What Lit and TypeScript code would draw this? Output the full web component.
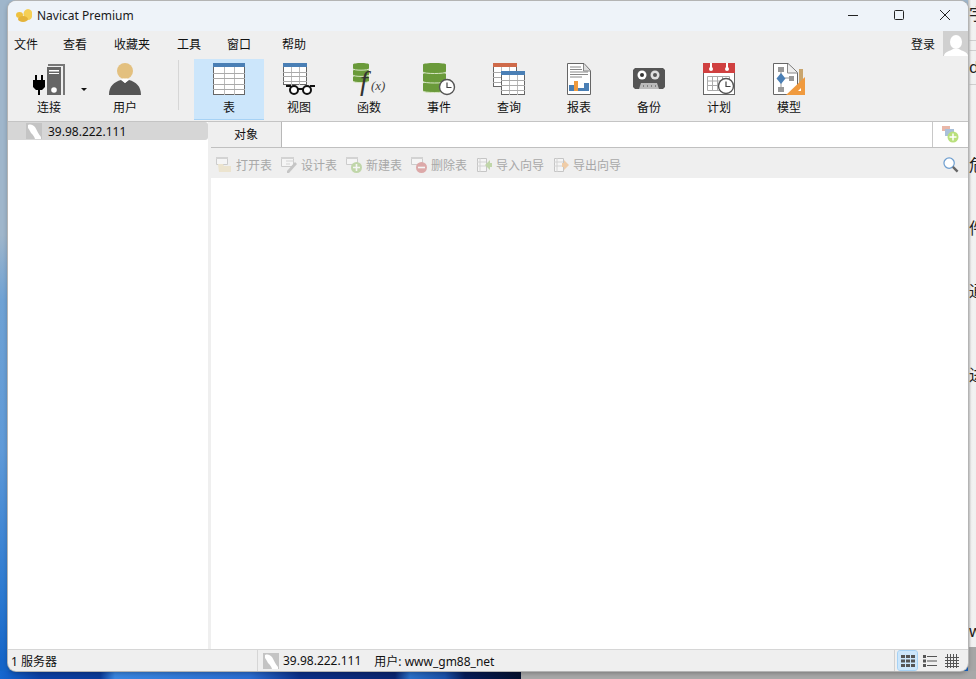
import { LitElement, html, css, svg } from 'lit';
import { customElement } from 'lit/decorators.js';

// draws a small table, x/y/w/h in icon coords
const grid = (x: number, y: number, w: number, h: number, head: string, cols: number, rows: number) => {
  const lines = [];
  const top = y + 4;
  for (let i = 1; i < cols; i++) {
    const lx = Math.round(x + (w * i) / cols) + 0.5;
    lines.push(svg`<path d="M${lx} ${top}V${y + h}" stroke="#bbb" stroke-width="1"/>`);
  }
  for (let i = 1; i < rows; i++) {
    const ly = Math.round(top + ((y + h - top) * i) / rows) + 0.5;
    lines.push(svg`<path d="M${x} ${ly}H${x + w}" stroke="#aaa" stroke-width="1"/>`);
  }
  return svg`<rect x="${x + 0.5}" y="${y + 0.5}" width="${w - 1}" height="${h - 1}" fill="#fff" stroke="#666"/>
    ${lines}<rect x="${x}" y="${y}" width="${w}" height="4" fill="${head}"/>`;
};

const db = (x: number, y: number, w: number, disc: number, n: number) => {
  const out = [];
  for (let i = n - 1; i >= 0; i--) {
    const cy = y + i * disc;
    out.push(svg`<path d="M${x} ${cy + 1.5} c0 -2 ${w} -2 ${w} 0 v${disc - 2} c0 2 -${w} 2 -${w} 0 z" fill="#6a9a3a"/>
      <path d="M${x} ${cy + disc - 0.5} c0 2 ${w} 2 ${w} 0" fill="none" stroke="#d7e6c4" stroke-width="1"/>`);
  }
  return out;
};

const clock = (cx: number, cy: number, r: number) => svg`
  <circle cx="${cx}" cy="${cy}" r="${r}" fill="#fff" stroke="#555" stroke-width="1.4"/>
  <path d="M${cx} ${cy - r + 3}V${cy + 0.5}H${cx + r - 3}" fill="none" stroke="#444" stroke-width="1.2"/>`;

const ICONS: Record<string, unknown> = {
  plug: svg`<path d="M15 1h17v31h-2V3H15z" fill="#777"/>
    <rect x="14" y="4" width="14" height="28" fill="#666"/>
    <path d="M16 7h10v1.5H16zM16 10h10v1H16z" fill="#fff"/>
    <circle cx="21" cy="27" r="2.8" fill="#fff"/>
    <path d="M2 12h2v5h4v-5h2v5h2v7l-3 3H7v5H5v-5H3l-3-3v-7h2z" fill="#000"/>`,
  user: svg`<circle cx="16" cy="8" r="8" fill="#e3c07f"/>
    <path d="M0 32c0-9 5-13 12-15l4 3 4-3c7 2 12 6 12 15z" fill="#555"/>
    <path d="M12 16.500l4 3.500 4-3.500-2-1h-4z" fill="#fff"/>`,
  table: grid(0, 0, 32, 32, '#4a7fb5', 3, 5),
  view: svg`${grid(0, 0, 24, 22, '#4a7fb5', 3, 4)}
    <circle cx="11" cy="27" r="4" fill="#fff" stroke="#111" stroke-width="2"/>
    <circle cx="24" cy="27" r="4" fill="#fff" stroke="#111" stroke-width="2"/>
    <path d="M15 26h5" stroke="#111" stroke-width="2"/>
    <path d="M3 23h5M27 23h5" stroke="#111" stroke-width="2"/>`,
  func: svg`${db(0, 0, 16, 6.2, 3)}
    <text x="7" y="27" font-family="Liberation Serif" font-style="italic" font-size="28" fill="#333">f</text>
    <text x="18" y="27" font-family="Liberation Serif" font-style="italic" font-size="13" fill="#444">(x)</text>`,
  event: svg`${db(0, 0, 23, 9.500, 3)}${clock(24, 24, 7.500)}`,
  query: svg`${grid(0, 0, 24, 24, '#cf6a4a', 3, 4)}${grid(8, 8, 24, 24, '#4a7fb5', 3, 4)}`,
  report: svg`<path d="M4.500 .5H21l6.500 7v24h-23z" fill="#fff" stroke="#666"/>
    <path d="M20.500 1v7h7" fill="#ddd" stroke="#888"/>
    <path d="M7 4h11M7 6.500h12M7 9h18M7 11.500h18M7 14h12" stroke="#888"/>
    <path d="M6 22h5v6H6z" fill="#4a7fb5"/><path d="M11 18h4v10h-4z" fill="#f09a3e"/>
    <path d="M15 25h6v3h-6z" fill="#4a7fb5"/><path d="M21 20h5v8h-5z" fill="#4a7fb5"/>`,
  backup: svg`<path d="M2 5h28l2 2v17l-2 2H2l-2-2V7z" fill="#555"/>
    <circle cx="9" cy="12" r="4.500" fill="#fff"/><circle cx="9" cy="12" r="2" fill="#333"/>
    <circle cx="22" cy="12" r="4.500" fill="#ddd"/><circle cx="22" cy="12" r="2" fill="#555"/>
    <path d="M6 26l2-6h16l2 6z" fill="#bbb"/><path d="M10 23h1M14 23h1M18 23h1M22 23h1" stroke="#444"/>`,
  schedule: svg`<rect x=".5" y=".5" width="31" height="31" fill="#fff" stroke="#666"/>
    <rect width="32" height="10" fill="#d04040"/>
    <path d="M8 0v5M24 0v5" stroke="#fff" stroke-width="2"/>
    <circle cx="8" cy="6" r="2" fill="#fff"/><circle cx="24" cy="6" r="2" fill="#fff"/>
    <path d="M4.500 13.500h22v14h-22zM4.500 18h22M4.500 22.500h22M9.500 13.500v14M14.500 13.500v14M19.500 13.500v14" fill="none" stroke="#aaa"/>
    ${clock(23, 23, 7.500)}`,
  model: svg`<path d="M.5 .5H15l9.500 9v22H.5z" fill="#fff" stroke="#666"/>
    <path d="M14.500 1v9h10" fill="#eee" stroke="#888"/>
    <path d="M8 6v20M12 15h8" stroke="#999"/>
    <rect x="5" y="4" width="6" height="5" fill="#999"/>
    <rect x="5" y="24" width="6" height="5" fill="#999"/>
    <rect x="16" y="13" width="5" height="5" fill="#999"/>
    <path d="M8 10l4.500 5.500L8 21l-4.500-5.500z" fill="#4a7fb5"/>
    <path d="M26 6h4v16h-4z" fill="#c9a56e"/>
    <path d="M32 14v18H13z" fill="#f09a3e"/><path d="M28 25v3h-3z" fill="#fff"/>`,
};

const MINI: Record<string, unknown> = {
  open: svg`<path d="M.5 .5h11v7H.5z" fill="#fff" stroke="#999"/><path d="M0 0h12v2H0z" fill="#aaa"/>
    <path d="M2 7h5l1 2h7v6H3z" fill="#e8d6a0"/>`,
  design: svg`<path d="M.5 .5h12v9H.5z" fill="#fff" stroke="#999"/><path d="M0 0h13v2H0z" fill="#aaa"/>
    <path d="M5 4h8M5 7h4" stroke="#aaa"/><path d="M6 14l8-9 2 2-8 9H6z" fill="#888"/>`,
  add: svg`<path d="M.5 .5h11v7H.5z" fill="#fff" stroke="#999"/><path d="M0 0h12v2H0z" fill="#aaa"/>
    <circle cx="10.500" cy="10.500" r="5.500" fill="#7cb342"/><path d="M7 10.500h7M10.500 7v7" stroke="#fff" stroke-width="1.600"/>`,
  del: svg`<path d="M.5 .5h11v7H.5z" fill="#fff" stroke="#999"/><path d="M0 0h12v2H0z" fill="#aaa"/>
    <circle cx="10.500" cy="10.500" r="5.500" fill="#c04040"/><path d="M7 10.500h7" stroke="#fff" stroke-width="1.600"/>`,
  imp: svg`<path d="M1.500 1.500h9v13h-9z" fill="#fff" stroke="#888"/><path d="M4 1v14M1 5h9M1 9h9" stroke="#aaa"/>
    <path d="M9 8l5-5v3h2v4h-2v3z" fill="#7cb342"/>`,
  exp: svg`<path d="M1.500 1.500h9v13h-9z" fill="#fff" stroke="#888"/><path d="M4 1v14M1 5h9M1 9h9" stroke="#aaa"/>
    <path d="M16 8l-5-5v3H9v4h2v3z" fill="#f09a3e"/>`,
};

const LEFT_TOOLS = [
  { icon: 'plug', label: '连接', cls: 'connect' },
  { icon: 'user', label: '用户', cls: 'account' },
];
const MAIN_TOOLS = [
  { icon: 'table', label: '表', cls: 'on' },
  { icon: 'view', label: '视图', cls: '' },
  { icon: 'func', label: '函数', cls: '' },
  { icon: 'event', label: '事件', cls: '' },
  { icon: 'query', label: '查询', cls: '' },
  { icon: 'report', label: '报表', cls: '' },
  { icon: 'backup', label: '备份', cls: '' },
  { icon: 'schedule', label: '计划', cls: '' },
  { icon: 'model', label: '模型', cls: '' },
];
const ACTIONS = [
  { icon: 'open', label: '打开表' },
  { icon: 'design', label: '设计表' },
  { icon: 'add', label: '新建表' },
  { icon: 'del', label: '删除表' },
  { icon: 'imp', label: '导入向导' },
  { icon: 'exp', label: '导出向导' },
];
const MENUS = ['文件', '查看', '收藏夹', '工具', '窗口', '帮助'];
// bits of other windows that stick out behind this one
const BEHIND = [
  { t: '字', y: 5 }, { t: 'd', y: 58 }, { t: '危', y: 156 },
  { t: '件', y: 219 }, { t: '通', y: 282 }, { t: '进', y: 366 }, { t: 'w', y: 622 },
];

const seal = (size: number) => html`<svg width=${size} height=${size} viewBox="0 0 16 16">
  <rect width="16" height="16" fill="#c4c4c4"/>
  <path d="M2 2c3-1 5 0 7 2 2 3 3 7 6 10v2H9C8 13 7 12 5 10 4 8 3 6 2 5z" fill="#fff"/>
</svg>`;

@customElement('app-root')
export class AppRoot extends LitElement {
  static styles = css`
    :host {
      display: block;
      width: 976px;
      height: 679px;
      position: relative;
      overflow: hidden;
      font-family: "Noto Sans", "Noto Sans CJK SC", sans-serif;
    }
    .desktop {
      position: absolute;
      inset: 0;
      background: linear-gradient(180deg, #9fb6cb 0, #9fb6cb 235px, #6fa2d4 300px, #5f9ad8 450px, #2a78d0 600px, #1565c8 660px);
    }
    .strip {
      position: absolute;
      left: 968px;
      right: 0;
      top: 0;
      height: 647px;
      background: linear-gradient(90deg, #bdbdbd 0, #f4f4f4 3px, #f0f0f0 100%);
    }
    .strip-low {
      position: absolute;
      left: 968px;
      right: 0;
      top: 647px;
      bottom: 0;
      background: #a6a6a6;
    }
    .wallpaper {
      position: absolute;
      left: 0;
      width: 521px;
      top: 671px;
      bottom: 0;
      background: linear-gradient(90deg, #1668d0 0, #0a3fa4 40px, #0a3a98 100px, #3a86e0 115px, #2a6cd0 250px, #0a2f88 300px, #0a2570 395px, #2a70c8 410px, #1a50a8 445px, #061c58 465px, #04102e 521px);
    }
    .floor {
      position: absolute;
      left: 521px;
      right: 0;
      top: 671px;
      bottom: 0;
      background: #a8a8a8;
    }
    .behind {
      position: absolute;
      left: 969px;
      font-size: 16px;
      line-height: 18px;
      color: #222;
    }
    .rule {
      position: absolute;
      left: 969px;
      right: 0;
      height: 1px;
      background: #cfcfcf;
    }
    .window {
      position: absolute;
      left: 8px;
      top: 1px;
      width: 960px;
      height: 670px;
      display: flex;
      flex-direction: column;
      background: #efefef;
      border-radius: 8px;
      overflow: hidden;
      box-shadow: 0 0 0 1px #b4b4b4, 0 2px 5px rgba(0, 0, 0, 0.3);
      font-size: 12px;
      color: #111;
    }
    .title {
      height: 30px;
      box-sizing: border-box;
      flex: none;
      display: flex;
      align-items: center;
      background: #eef3f9;
      padding: 0 0 2px 8px;
    }
    .title .logo { margin-right: 5px; }
    .title .name { flex: 1; font-size: 12px; color: #1a1a1a; }
    .winbtn {
      width: 46px;
      height: 28px;
      display: flex;
      align-items: center;
      justify-content: center;
    }
    .menubar {
      height: 28px;
      flex: none;
      display: grid;
      grid-template-columns: 49px 51px 63px 50px 55px 1fr auto 8px 25px;
      padding-left: 6px;
      align-items: start;
    }
    .menubar span { line-height: 28px; }
    .avatar { width: 25px; height: 25px; grid-column: 9; }
    .login { grid-column: 7; }
    .toolbar {
      height: 62px;
      flex: none;
      display: flex;
      border-bottom: 1px solid #c4c4c4;
    }
    .tool {
      width: 70px;
      height: 61px;
      box-sizing: border-box;
      display: flex;
      flex-direction: column;
      align-items: center;
      padding-top: 4px;
      position: relative;
    }
    .tool svg { display: block; }
    .tool span { margin-top: 4px; line-height: 17px; }
    .tool.on {
      background: #cce6fb;
      border-bottom: 1px solid #a6d2f5;
    }
    .tool.connect { margin-left: 6px; }
    .tool.account { margin-left: 6px; }
    .caret {
      position: absolute;
      right: -3px;
      top: 29px;
      width: 0;
      height: 0;
      border: 3px solid transparent;
      border-top: 3px solid #111;
    }
    .sep { width: 1px; height: 50px; margin: 1px 15px 0 18px; background: #d6d6d6; }
    .body { flex: 1; display: flex; min-height: 0; }
    .side { width: 200px; flex: none; background: #fff; }
    .conn {
      height: 18px;
      background: #d6d6d6;
      display: flex;
      align-items: center;
      padding-left: 18px;
      gap: 6px;
      border-radius: 0 3px 3px 0;
    }
    .main {
      flex: 1;
      margin-left: 3px;
      display: flex;
      flex-direction: column;
      min-width: 0;
    }
    .tabs { height: 26px; flex: none; display: flex; border-bottom: 1px solid #c0c0c0; box-sizing: border-box; }
    .tab { width: 70px; text-align: center; line-height: 26px; }
    .search {
      flex: 1;
      background: #fff;
      border-left: 1px solid #b8b8b8;
      border-right: 1px solid #c8c8c8;
    }
    .plus { width: 35px; display: flex; align-items: center; justify-content: center; background: #fff; }
    .actions { height: 30px; box-sizing: border-box; flex: none; display: flex; align-items: center; padding: 4px 0 0 5px; }
    .action { display: flex; align-items: center; gap: 4px; margin-right: 9px; color: #a8a8a8; }
    .action svg { opacity: 0.4; }
    .actions .find { margin-left: auto; margin-right: 9px; display: block; }
    .content { flex: 1; background: #fff; }
    .status {
      height: 22px;
      flex: none;
      display: flex;
      align-items: center;
      border-top: 1px solid #d6d6d6;
      box-sizing: border-box;
    }
    .status .count { width: 249px; padding-left: 3px; box-sizing: border-box; }
    .status .info {
      flex: 1;
      height: 100%;
      display: flex;
      align-items: center;
      border-left: 1px solid #d6d6d6;
      padding-left: 5px;
    }
    .status .info .ip { margin: 0 13px 0 4px; }
    .views {
      height: 100%;
      display: flex;
      align-items: center;
      border-left: 1px solid #d0d0d0;
      padding: 0 7px 0 3px;
      gap: 3px;
    }
    .vbtn { width: 19px; height: 19px; display: flex; align-items: center; justify-content: center; }
    .vbtn.on { background: #cce6fb; outline: 1px solid #a6d2f5; border-radius: 2px; }
  `;

  private _tool(t: { icon: string; label: string; cls: string }) {
    return html`<div class="tool ${t.cls}">
      <svg width="32" height="32" viewBox="0 0 32 32" style="overflow:visible">${ICONS[t.icon]}</svg>
      <span>${t.label}</span>
      ${t.cls === 'connect' ? html`<i class="caret"></i>` : ''}
    </div>`;
  }

  render() {
    return html`
      <div class="desktop"></div>
      <div class="strip"></div>
      <div class="strip-low"></div>
      <div class="wallpaper"></div>
      <div class="floor"></div>
      ${BEHIND.map((b) => html`<span class="behind" style="top:${b.y}px">${b.t}</span>`)}
      <div class="rule" style="top:40px"></div>
      <div class="rule" style="top:50px"></div>
      <div class="rule" style="top:84px"></div>
      <div class="window">
        <div class="title">
          <svg class="logo" width="16" height="16" viewBox="0 0 16 16">
            <ellipse cx="12" cy="7.500" rx="4.500" ry="5.500" fill="#f5cf55"/>
            <ellipse cx="3.500" cy="8" rx="3.500" ry="3" fill="#eec13f"/>
            <ellipse cx="7" cy="12" rx="5" ry="3" fill="#e4b33a"/>
          </svg>
          <span class="name">Navicat Premium</span>
          <div class="winbtn">
            <svg width="10" height="10"><path d="M0 5.500h10" stroke="#222"/></svg>
          </div>
          <div class="winbtn">
            <svg width="10" height="10"><rect x=".5" y=".5" width="9" height="9" rx="1" fill="none" stroke="#222"/></svg>
          </div>
          <div class="winbtn">
            <svg width="10" height="10"><path d="M0 0l10 10M10 0L0 10" stroke="#222"/></svg>
          </div>
        </div>
        <div class="menubar">
          ${MENUS.map((m) => html`<span>${m}</span>`)}
          <span class="login">登录</span>
          <svg class="avatar" viewBox="0 0 25 25">
            <rect width="25" height="25" fill="#d0d0d0"/>
            <ellipse cx="13" cy="11" rx="6" ry="7" fill="#fff"/>
            <path d="M1 25c0-4 6-5 9-7h6c3 2 9 3 9 7z" fill="#fff"/>
          </svg>
        </div>
        <div class="toolbar">
          ${LEFT_TOOLS.map((t) => this._tool(t))}
          <div class="sep"></div>
          ${MAIN_TOOLS.map((t) => this._tool(t))}
        </div>
        <div class="body">
          <div class="side">
            <div class="conn">${seal(16)}<span>39.98.222.111</span></div>
          </div>
          <div class="main">
            <div class="tabs">
              <div class="tab">对象</div>
              <div class="search"></div>
              <div class="plus">
                <svg width="17" height="17" viewBox="0 0 17 17">
                  <path d="M0 0h8v5H0z" fill="#e9b7a8"/><path d="M3 3h9v7H3z" fill="#a9c0da"/>
                  <circle cx="11" cy="11" r="5.500" fill="#b9e07c"/>
                  <path d="M7.500 11h7M11 7.500v7" stroke="#fff" stroke-width="1.500"/>
                </svg>
              </div>
            </div>
            <div class="actions">
              ${ACTIONS.map((a) => html`<div class="action">
                <svg width="16" height="16" viewBox="0 0 16 16">${MINI[a.icon]}</svg><span>${a.label}</span>
              </div>`)}
              <svg class="find" width="16" height="16" viewBox="0 0 17 17">
                <circle cx="6.500" cy="6.500" r="5.500" fill="#fff" stroke="#6f9fd0" stroke-width="1.300"/>
                <path d="M10.500 10.500l5 5" stroke="#666" stroke-width="2.500"/>
              </svg>
            </div>
            <div class="content"></div>
          </div>
        </div>
        <div class="status">
          <div class="count">1 服务器</div>
          <div class="info">
            ${seal(16)}<span class="ip">39.98.222.111</span><span>用户: www_gm88_net</span>
          </div>
          <div class="views">
            <div class="vbtn on">
              <svg width="14" height="12"><path d="M0 0h4v3H0zM5 0h4v3H5zM10 0h4v3h-4zM0 4.500h4v3H0zM5 4.500h4v3H5zM10 4.500h4v3h-4zM0 9h4v3H0zM5 9h4v3H5zM10 9h4v3h-4z" fill="#555"/></svg>
            </div>
            <div class="vbtn">
              <svg width="14" height="12"><path d="M0 0h3v3H0zM0 4.500h3v3H0zM0 9h3v3H0zM4 1h10v1H4zM4 5.500h10v1H4zM4 10h10v1H4z" fill="#555"/></svg>
            </div>
            <div class="vbtn">
              <svg width="14" height="14"><path d="M0 3.500h14M0 6.500h14M0 9.500h14M0 12.500h14M2.500 0v14M5.500 0v14M8.500 0v14M11.500 0v14" stroke="#555"/></svg>
            </div>
          </div>
        </div>
      </div>
    `;
  }
}
